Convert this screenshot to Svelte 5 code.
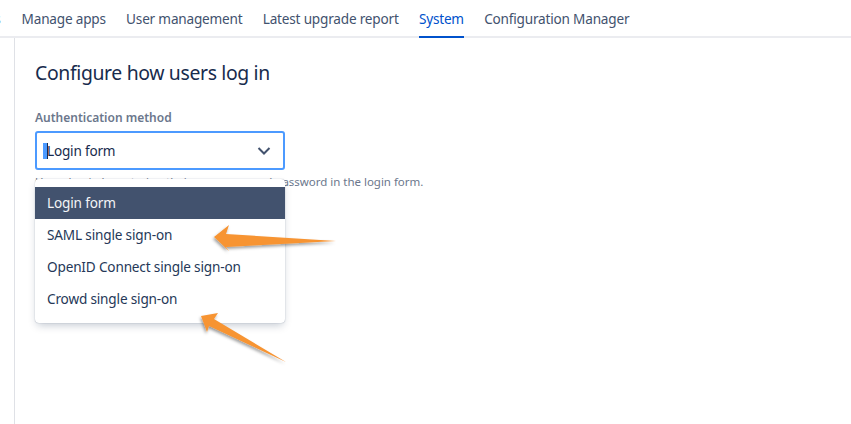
<script lang="ts">
  const tabs = ["Manage apps", "User management", "Latest upgrade report", "System", "Configuration Manager"];
  const options = ["Login form", "SAML single sign-on", "OpenID Connect single sign-on", "Crowd single sign-on"];
  let selected = $state("Login form");
</script>

<div class="page">
  <nav class="tabs">
    <span class="cut">s</span>
    {#each tabs as tab}
      <span class="tab" class:active={tab === "System"}>{tab}</span>
    {/each}
  </nav>
  <div class="body">
    <aside class="rail"></aside>
    <main class="content">
      <h1>Configure how users log in</h1>
      <div class="label">Authentication method</div>
      <div class="field">
        <div class="select">
          <span class="value"><span class="caret"></span>{selected}</span>
          <svg class="chev" width="14" height="10" viewBox="0 0 14 10">
            <path d="M1.5 2 7 7.5 12.5 2" fill="none" stroke="#42526e" stroke-width="2" />
          </svg>
        </div>
        <p class="help">Users log in by entering their username and password in the login form.</p>
        <div class="menu">
          {#each options as opt}
            <div class="option" class:current={opt === selected}>{opt}</div>
          {/each}
        </div>
      </div>
    </main>
  </div>

  <svg class="arrows" width="851" height="424" viewBox="0 0 851 424">
    <defs>
      <filter id="sh" x="-20%" y="-40%" width="140%" height="180%">
        <feDropShadow dx="-1" dy="2" stdDeviation="1.6" flood-color="#000" flood-opacity="0.38" />
      </filter>
    </defs>
    <path filter="url(#sh)" fill="#f79433" d="M214 237 229 225 226 234 336 241 226 247 229 251Z" />
    <path filter="url(#sh)" fill="#f79433" d="M201 316 218 313 214 319 286 362 209 326 207 332Z" />
  </svg>
</div>

<style>
  :global(body) { margin: 0; background: #fff; }
  .page {
    position: relative; width: 851px; height: 424px; overflow: hidden;
    font-family: "Noto Sans", sans-serif; font-size: 13.6px; letter-spacing: -.2px; color: #172b4d;
  }
  .tabs {
    display: flex; gap: 20.3px; height: 36px; border-bottom: 2px solid #ebecf0;
    margin-left: -5.7px; white-space: nowrap; color: #42526e;
  }
  .tab, .cut { line-height: 38px; height: 36px; }
  .cut { width: 7px; }
  .tab.active { color: #0052cc; border-bottom: 2px solid #0052cc; }
  .body { display: flex; height: 386px; }
  .rail { width: 14px; border-right: 1px solid #dfe1e6; }
  .content { padding: 0 20px; flex: 1; }
  h1 { margin: 21px 0 0; font-size: 19.4px; letter-spacing: -.35px; font-weight: 400; line-height: 28px; color: #172b4d; }
  .label { margin-top: 23px; font-size: 12px; letter-spacing: 0; line-height: 16px; font-weight: 600; color: #6b778c; }
  .field { position: relative; margin-top: 5px; width: 250px; }
  .select {
    box-sizing: border-box; width: 250px; height: 39px; border: 2px solid #4c9aff; border-radius: 3px;
    display: flex; align-items: center; justify-content: space-between; padding: 0 12px 0 6px;
  }
  .value { display: flex; align-items: center; }
  .caret { width: 5px; height: 16px; margin-right: -1px; background: #4c9aff; border-right: 1px solid #172b4d; box-sizing: border-box; }
  .help { margin: 4px 0 0; width: 500px; font-size: 11.5px; letter-spacing: -.02px; line-height: 16px; color: #6b778c; }
  .menu {
    position: absolute; left: 0; top: 48px; width: 250px; padding: 8px 0 8px; box-sizing: border-box;
    background: #fff; border-radius: 4px;
    box-shadow: 0 4px 8px -2px rgba(9, 30, 66, .25), 0 0 1px rgba(9, 30, 66, .45);
  }
  .option { height: 32px; line-height: 32px; padding-left: 12px; letter-spacing: -.17px; color: #253858; }
  .option.current { background: #42526e; color: #f4f5f7; }
  .arrows { position: absolute; left: 0; top: 0; pointer-events: none; }
</style>
